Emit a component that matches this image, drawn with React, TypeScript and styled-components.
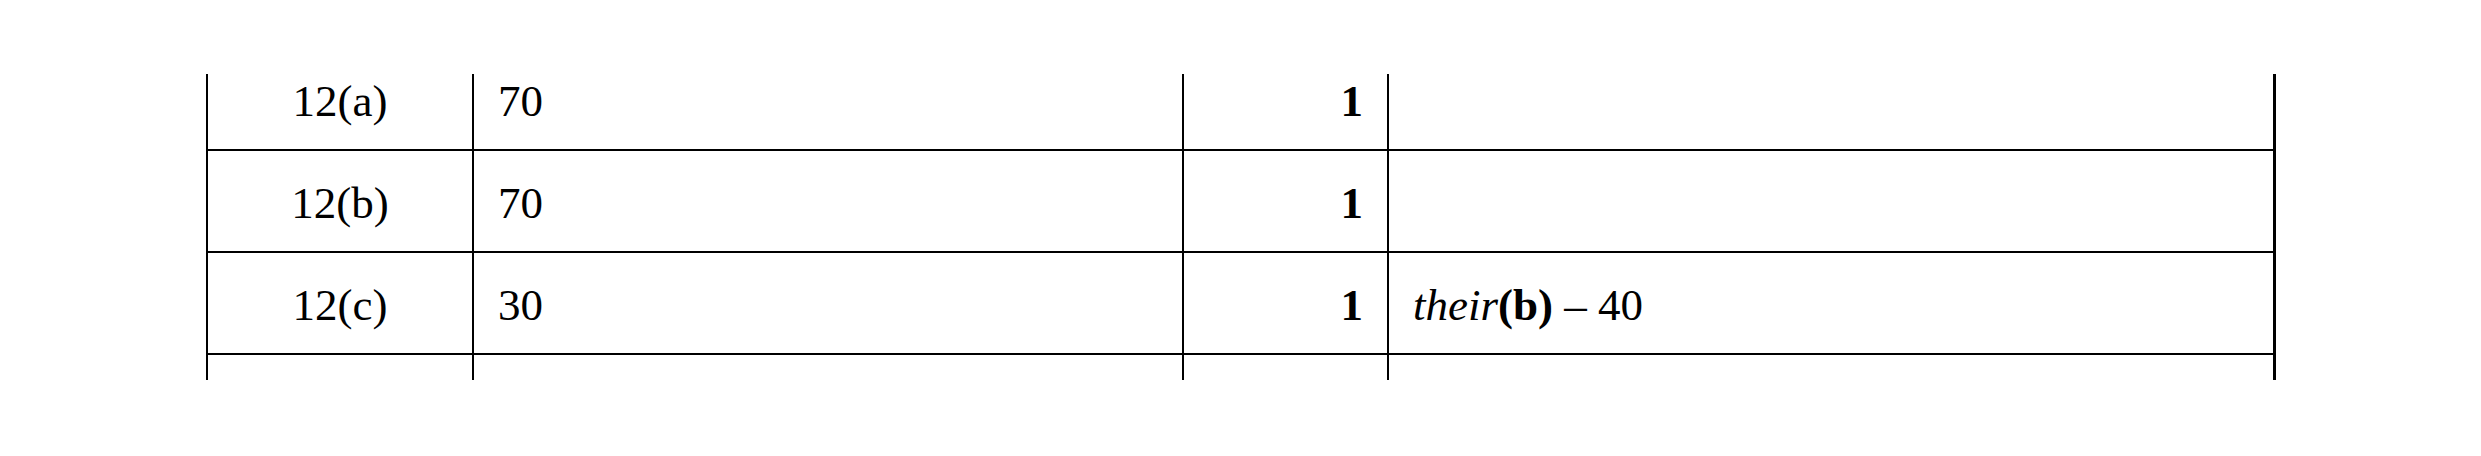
import styled, { createGlobalStyle } from "styled-components";

const GlobalStyle = createGlobalStyle`
  html, body {
    margin: 0;
    padding: 0;
    background: #fff;
  }
  body {
    font-family: "Liberation Serif", "Times New Roman", serif;
    color: #000;
  }
`;

const Page = styled.div`
  width: 2481px;
  height: 456px;
  box-sizing: border-box;
  padding: 74px 0 0 206px;
  overflow: hidden;
  background: #fff;
`;

// the table is cut off above and below, as in the scanned page
const Clip = styled.div`
  width: fit-content;
  height: 306px;
  overflow: hidden;
  border-right: 3px solid #000;
`;

const Table = styled.div`
  margin-top: -25px;
`;

const Row = styled.div<{ $last?: boolean }>`
  display: grid;
  grid-template-columns: 266px 710px 205px 886px;
  border-bottom: ${({ $last }) => ($last ? "0" : "2px solid #000")};
`;

const Cell = styled.div<{ $align?: "left" | "center" | "right" }>`
  box-sizing: border-box;
  height: 100px;
  border-left: 2px solid #000;
  padding: 27px 24px 0;
  font-size: 45px;
  line-height: 50px;
  white-space: nowrap;
  text-align: ${({ $align }) => $align ?? "left"};
`;

const Mark = styled.span`
  font-weight: 700;
`;

const Em = styled.i`
  font-style: italic;
`;

const B = styled.b`
  font-weight: 700;
`;

const rows = [
  { q: "12(a)", a: "70", m: "1", note: false },
  { q: "12(b)", a: "70", m: "1", note: false },
  { q: "12(c)", a: "30", m: "1", note: true },
];

export default function App() {
  return (
    <>
      <GlobalStyle />
      <Page>
        <Clip>
          <Table>
            {rows.map((r) => (
              <Row key={r.q}>
                <Cell $align="center">{r.q}</Cell>
                <Cell>{r.a}</Cell>
                <Cell $align="right">
                  <Mark>{r.m}</Mark>
                </Cell>
                <Cell>
                  {r.note && (
                    <>
                      <Em>their</Em>
                      <B>(b)</B> – 40
                    </>
                  )}
                </Cell>
              </Row>
            ))}
            <Row $last>
              <Cell />
              <Cell />
              <Cell />
              <Cell />
            </Row>
          </Table>
        </Clip>
      </Page>
    </>
  );
}
